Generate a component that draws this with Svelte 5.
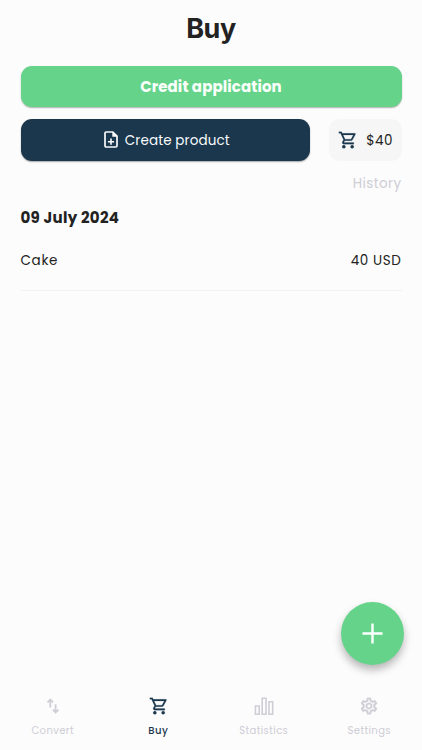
<script>
  // purchases grouped by day
  let days = [
    { date: "09 July 2024", items: [{ name: "Cake", price: 40, currency: "USD" }] },
  ];

  let total = 40; // shown next to the cart
  let activeTab = "Buy";

  let tabs = ["Convert", "Buy", "Statistics", "Settings"];
</script>

<!-- cart is used in the total box and in the bottom bar -->
{#snippet cartIcon()}
  <svg class="cart-icon" viewBox="0 0 24 24" fill="currentColor" stroke="currentColor" stroke-width="0.2">
    <path d="M15.55 13c.75 0 1.41-.41 1.75-1.03l3.58-6.49A.996.996 0 0 0 20.01 4H5.21l-.94-2H1v2h2l3.6 7.59-1.35 2.44C4.52 15.37 5.48 17 7 17h12v-2H7l1.1-2h7.45zM6.16 6h12.15l-2.76 5H8.53L6.16 6zM7 18c-1.1 0-1.99.9-1.99 2S5.9 22 7 22s2-.9 2-2-.9-2-2-2zm10 0c-1.1 0-1.99.9-1.99 2s.89 2 1.99 2 2-.9 2-2-.9-2-2-2z" />
  </svg>
{/snippet}

<div class="screen">
  <h1>Buy</h1>

  <main>
    <button class="credit">Credit application</button>

    <div class="actions">
      <button class="create">
        <svg class="file-icon" viewBox="0 0 14 17">
          <path d="M1 2.2Q1 1 2.2 1H8.8L13 5.2V14.8Q13 16 11.8 16H2.2Q1 16 1 14.8Z" fill="none" stroke="currentColor" stroke-width="1.7" />
          <path d="M8.3 .8 13.3 5.8H8.3Z" fill="currentColor" />
          <path d="M7 7.6v6.2M3.9 10.7h6.2" stroke="currentColor" stroke-width="1.6" />
        </svg>
        <span>Create product</span>
      </button>
      <div class="total">
        {@render cartIcon()}
        <span>${total}</span>
      </div>
    </div>

    <p class="history">History</p>

    {#each days as day}
      <h2>{day.date}</h2>
      {#each day.items as item}
        <div class="item">
          <span class="item-name">{item.name}</span>
          <span class="item-price">{item.price} {item.currency}</span>
        </div>
      {/each}
    {/each}
  </main>

  <nav>
    {#each tabs as tab}
      <button class="tab" class:active={tab == activeTab} on:click={() => (activeTab = tab)}>
        <div class="tab-icon">
          {#if tab == "Convert"}
            <svg width="20" height="20" viewBox="0 0 20 20" fill="none" stroke="currentColor" stroke-width="1.8">
              <path d="M7.3 11.6V3.6M4.5 6.3 7.3 3.5 10.1 6.3M12.6 8.2v8.1M9.8 13.6l2.8 2.8 2.8-2.8" />
            </svg>
          {:else if tab == "Buy"}
            {@render cartIcon()}
          {:else if tab == "Statistics"}
            <svg width="20" height="20" viewBox="0 0 20 20" fill="none" stroke="currentColor" stroke-width="1.6">
              <path d="M1.4 10H5.2V18.3H1.4ZM8.2 2.3H12V18.3H8.2ZM15 5.7H18.7V18.3H15Z" />
            </svg>
          {:else}
            <svg width="20" height="20" viewBox="0 0 24 24" fill="currentColor" stroke="currentColor" stroke-width="0.3">
              <path d="M19.43 12.98c.04-.32.07-.64.07-.98s-.03-.66-.07-.98l2.11-1.65c.19-.15.24-.42.12-.64l-2-3.46c-.12-.22-.39-.3-.61-.22l-2.49 1c-.52-.4-1.08-.73-1.69-.98l-.38-2.65C14.46 2.18 14.25 2 14 2h-4c-.25 0-.46.18-.49.42l-.38 2.65c-.61.25-1.17.59-1.69.98l-2.49-1c-.23-.09-.49 0-.61.22l-2 3.46c-.13.22-.07.49.12.64l2.11 1.65c-.04.32-.07.65-.07.98s.03.66.07.98l-2.11 1.65c-.19.15-.24.42-.12.64l2 3.46c.12.22.39.3.61.22l2.49-1c.52.4 1.08.73 1.69.98l.38 2.65c.03.24.24.42.49.42h4c.25 0 .46-.18.49-.42l.38-2.65c.61-.25 1.17-.59 1.69-.98l2.49 1c.23.09.49 0 .61-.22l2-3.46c.12-.22.07-.49-.12-.64l-2.11-1.65zm-1.98-1.71c.04.31.05.52.05.73s-.02.43-.05.73l-.14 1.13.89.7 1.08.84-.7 1.21-1.27-.51-1.04-.42-.9.68c-.43.32-.84.56-1.25.73l-1.06.43-.16 1.13-.2 1.35h-1.4l-.19-1.35-.16-1.13-1.06-.43c-.43-.18-.83-.41-1.23-.71l-.91-.7-1.06.43-1.27.51-.7-1.21 1.08-.84.89-.7-.14-1.13c-.03-.31-.05-.54-.05-.74s.02-.43.05-.73l.14-1.13-.89-.7-1.08-.84.7-1.21 1.27.51 1.04.42.9-.68c.43-.32.84-.56 1.25-.73l1.06-.43.16-1.13.2-1.35h1.39l.19 1.35.16 1.13 1.06.43c.43.18.83.41 1.23.71l.91.7 1.06-.43 1.27-.51.7 1.21-1.07.85-.89.7.14 1.13zM12 8c-2.21 0-4 1.79-4 4s1.79 4 4 4 4-1.79 4-4-1.79-4-4-4zm0 6c-1.1 0-2-.9-2-2s.9-2 2-2 2 .9 2 2-.9 2-2 2z" />
            </svg>
          {/if}
        </div>
        <span>{tab}</span>
      </button>
    {/each}
  </nav>

  <!-- floats above the list -->
  <button class="add" aria-label="Add">
    <svg width="21" height="21" viewBox="0 0 22 22" stroke="currentColor" stroke-width="2.5">
      <path d="M11 .5v21M.5 11h21" />
    </svg>
  </button>
</div>

<style>
  :global(body) {
    background-color: #fcfcfc;
  }

  .screen {
    position: relative;
    display: flex;
    flex-direction: column;
    height: 750px;
    overflow: hidden;
    background-color: #fcfcfc;
    color: #222;
    font-family: Poppins, Inter, sans-serif;
  }

  button {
    border: none;
    padding: 0;
    font-family: inherit;
    cursor: pointer;
  }

  svg {
    display: block;
  }

  h1 {
    margin: 11px 0 0;
    height: 54.5px;
    line-height: 36px;
    font-family: Inter, sans-serif;
    font-size: 27px;
    font-weight: 700;
    letter-spacing: -0.4px;
    text-align: center;
  }

  main {
    flex: 1;
    padding: 0 20.5px;
  }

  .credit {
    display: block;
    width: 100%;
    height: 41.5px;
    border-radius: 11px;
    background-color: #65d48a;
    box-shadow: 0 1px 1.5px rgb(0 0 0 / 0.3);
    color: #fafffb;
    font-size: 15px;
    font-weight: 700;
    letter-spacing: 0.1px;
  }

  .actions {
    display: flex;
    justify-content: space-between;
    margin-top: 12px;
  }

  .create {
    display: flex;
    align-items: center;
    justify-content: center;
    gap: 7px;
    width: 289.5px;
    height: 41.5px;
    padding-left: 3px;
    border-radius: 11px;
    background-color: #1a374d;
    box-shadow: 0 1px 1.5px rgb(0 0 0 / 0.35);
    color: #f8fafc;
    font-size: 13.5px;
    letter-spacing: 0.1px;
  }

  .create span {
    padding-top: 2px;
  }

  .file-icon {
    width: 14px;
    height: 17px;
  }

  .total {
    display: flex;
    align-items: center;
    justify-content: center;
    gap: 8px;
    width: 73px;
    height: 41.5px;
    padding-left: 1px;
    box-sizing: border-box;
    border-radius: 11px;
    background-color: #f6f6f6;
    font-size: 13.5px;
    letter-spacing: 0.4px;
  }

  .total span {
    padding-top: 2px;
  }

  .cart-icon {
    width: 20px;
    height: 20px;
    color: #1a374d;
  }

  .history {
    margin: 13px 0 0;
    line-height: 20px;
    color: #cfcdd6;
    font-size: 13.5px;
    letter-spacing: 0.4px;
    text-align: right;
  }

  h2 {
    margin: 14px 0 0;
    line-height: 20px;
    font-size: 15px;
    font-weight: 700;
    letter-spacing: 0.3px;
  }

  .item {
    display: flex;
    align-items: center;
    justify-content: space-between;
    height: 57px;
    padding-top: 5px;
    border-bottom: 1px solid #f1f1f1;
    font-size: 13.5px;
  }

  .item-name {
    letter-spacing: 0.7px;
  }

  .item-price {
    letter-spacing: 0.6px;
  }

  nav {
    display: grid;
    grid-template-columns: repeat(4, 1fr);
    height: 54px;
  }

  .tab {
    display: flex;
    flex-direction: column;
    align-items: center;
    background: none;
    color: #cfcdd6;
    font-size: 10px;
    line-height: 14px;
    letter-spacing: 0.4px;
  }

  .tab-icon {
    height: 27.5px;
  }

  .tab .cart-icon {
    margin-left: 1px;
    color: inherit;
  }

  .active {
    color: #1a374d;
    font-weight: 500;
  }

  .add {
    position: absolute;
    right: 18px;
    bottom: 85px;
    display: flex;
    align-items: center;
    justify-content: center;
    width: 63px;
    height: 63px;
    border-radius: 50%;
    background-color: #65d48a;
    box-shadow: 0 5px 8px rgb(0 0 0 / 0.28);
    color: #fcfffd;
  }
</style>
